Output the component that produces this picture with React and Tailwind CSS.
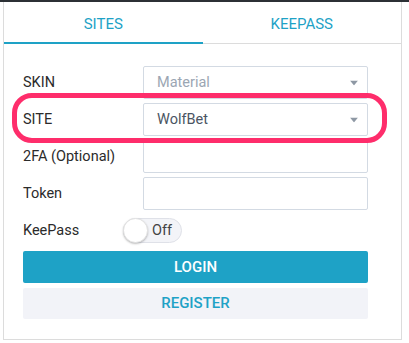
import React, { useState } from 'react';

const Caret = () => (
  <svg width="8" height="5" viewBox="0 0 8 5" className="absolute right-[10px] top-1/2 -translate-y-1/2">
    <path d="M0 0 L8 0 L4 5 Z" fill="#8e98a4" />
  </svg>
);

const Row = ({ label, children }) => (
  <div className="flex h-[33px] items-center">
    <div className="w-[120px] text-[14.5px] text-[#2b2b2b]">{label}</div>
    <div className="relative h-full w-[225px]">{children}</div>
  </div>
);

const App = () => {
  const [tab, setTab] = useState('sites');
  const [keepass, setKeepass] = useState(false);

  return (
    <div className="h-[343px] w-[409px] bg-white" style={{ fontFamily: 'Roboto, "Liberation Sans", sans-serif' }}>
      <div className="h-[2px] bg-[#2c3035]" />
      <div className="relative ml-[3px] h-[338px] w-[399px] border-x border-b border-[#dcdcdc]">
        {/* tabs */}
        <div className="flex h-[42px] border-b border-[#dcdcdc]">
          <button
            onClick={() => setTab('sites')}
            className="relative flex flex-1 items-center justify-center pt-[4px] text-[15px] text-[#1ea2c6]"
          >
            SITES
            {tab === 'sites' && <span className="absolute -bottom-px left-0 right-0 h-[2px] bg-[#1ea2c6]" />}
          </button>
          <button
            onClick={() => setTab('keepass')}
            className="relative flex flex-1 items-center justify-center pt-[4px] text-[15px] text-[#1ea2c6]"
          >
            KEEPASS
            {tab === 'keepass' && <span className="absolute -bottom-px left-0 right-0 h-[2px] bg-[#1ea2c6]" />}
          </button>
        </div>

        <div className="flex flex-col gap-[4px] pl-[19px] pt-[22px]">
          <Row label="SKIN">
            <div className="flex h-full items-center rounded-[2px] border border-[#d3dae3] pl-[13px] text-[14.5px] text-[#9ba6b3]">
              Material
            </div>
            <Caret />
          </Row>
          <Row label="SITE">
            <div className="flex h-full items-center rounded-[2px] border border-[#d3dae3] pl-[13px] text-[14.5px] text-[#4b5563]">
              WolfBet
            </div>
            <Caret />
          </Row>
          <Row label="2FA (Optional)">
            <input className="h-full w-full rounded-[2px] border border-[#d3dae3] px-[13px] text-[14px] outline-none" />
          </Row>
          <Row label="Token">
            <input className="h-full w-full rounded-[2px] border border-[#d3dae3] px-[13px] text-[14px] outline-none" />
          </Row>

          <div className="flex h-[33px] items-center">
            <div className="w-[100px] text-[14.5px] text-[#2b2b2b]">KeePass</div>
            <button
              onClick={() => setKeepass(!keepass)}
              className="relative flex h-[25px] w-[59px] items-center rounded-full border border-[#dfe1e8] bg-[#f3f4f8]"
            >
              <span className="absolute left-[-1px] top-[-1px] h-[25px] w-[25px] rounded-full border border-[#e2e2e2] bg-white shadow-[0_1px_2px_rgba(0,0,0,0.25)]" />
              <span className="ml-[28px] text-[14.5px] text-[#444]">{keepass ? 'On' : 'Off'}</span>
            </button>
          </div>

          <div className="flex w-[345px] flex-col gap-[5px]">
            <button className="h-[32px] rounded-[2px] bg-[#1ea2c6] text-[15px] font-medium text-white">LOGIN</button>
            <button className="h-[31px] rounded-[2px] bg-[#f2f3f8] text-[15px] font-medium text-[#1ea2c6]">REGISTER</button>
          </div>
        </div>

        {/* highlight ring */}
        <div className="pointer-events-none absolute left-[8px] top-[91px] h-[50px] w-[375px] rounded-[20px] border-[5px] border-[#fe2d6b]" />
      </div>
    </div>
  );
};

export default App;
